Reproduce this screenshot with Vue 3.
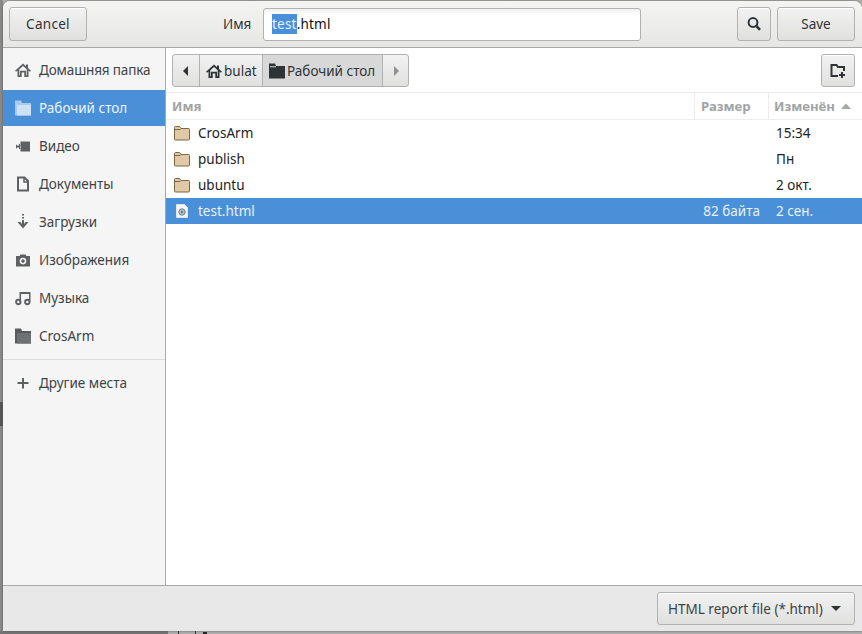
<script setup>
const places = [
  { label: 'Домашняя папка', icon: 'home' },
  { label: 'Рабочий стол', icon: 'folder', active: true },
  { label: 'Видео', icon: 'video' },
  { label: 'Документы', icon: 'doc' },
  { label: 'Загрузки', icon: 'down' },
  { label: 'Изображения', icon: 'camera' },
  { label: 'Музыка', icon: 'music' },
  { label: 'CrosArm', icon: 'folder' }
]
const files = [
  { name: 'CrosArm', size: '', date: '15:34', type: 'dir' },
  { name: 'publish', size: '', date: 'Пн', type: 'dir' },
  { name: 'ubuntu', size: '', date: '2 окт.', type: 'dir' },
  { name: 'test.html', size: '82 байта', date: '2 сен.', type: 'file', selected: true }
]
</script>

<template>
  <div class="desktop">
    <div class="window">
      <header class="header">
        <button class="btn text-btn cancel">Cancel</button>
        <div class="name-group">
          <span class="name-label">Имя</span>
          <div class="entry"><span class="sel">test</span>.html</div>
        </div>
        <div class="header-right">
          <button class="btn icon-btn">
            <svg width="16" height="16" viewBox="0 0 16 16"><circle cx="7" cy="6.500" r="4.400" fill="none" stroke="#2e3436" stroke-width="2"/><path d="M10 9.600l4 4.200" stroke="#2e3436" stroke-width="2.600" fill="none"/></svg>
          </button>
          <button class="btn text-btn">Save</button>
        </div>
      </header>

      <div class="body">
        <aside class="sidebar">
          <div v-for="p in places" :key="p.label" class="place" :class="{ active: p.active }">
            <span class="pi">
              <svg v-if="p.icon === 'home'" width="16" height="16" viewBox="0 0 16 16"><path fill-rule="evenodd" d="M8 1.500L0 8.700l1.100 1.100L2.500 8.600V15h4.200v-4.500h2.600V15h4.200V8.600l1.400 1.200L16 8.700 13 6V2.500h-2v1.700zM4.300 7.300L8 4l3.700 3.300v6h-.7V8.800H5v4.500h-.7z" fill="#5d6162"/></svg>
              <svg v-else-if="p.icon === 'folder'" width="16" height="16" viewBox="0 0 16 16"><path d="M0 0.500h6l1 2.500h9v12.500H0z" :fill="p.active ? '#a9caec' : '#585c5d'"/><path d="M2 5h14v10.500H2z" :fill="p.active ? '#cfe1f5' : '#6d7172'"/></svg>
              <svg v-else-if="p.icon === 'video'" width="16" height="16" viewBox="0 0 16 16"><path d="M5.500 3.500h9.500v10H5.500z" fill="#5d6162"/><path d="M1 6l1 1.500h2V5.800l1 .2v5l-1 .2V9.500H2L1 11z" fill="#5d6162"/></svg>
              <svg v-else-if="p.icon === 'doc'" width="16" height="16" viewBox="0 0 16 16"><path d="M3 1.500h6.500L13 5v9.500H3z" fill="#f6f6f6" stroke="#5d6162" stroke-width="2"/><path d="M9 1v5h5" fill="none" stroke="#5d6162" stroke-width="1.500"/></svg>
              <svg v-else-if="p.icon === 'down'" width="16" height="16" viewBox="0 0 16 16"><path d="M7 0h2v1.500H7zM7 3h2v1.500H7zM7 6h2v4l1.500-2 3 0L8 14.500 2.500 8h3L7 10z" fill="#5d6162"/></svg>
              <svg v-else-if="p.icon === 'camera'" width="16" height="16" viewBox="0 0 16 16"><path fill-rule="evenodd" d="M5.500 2.500h5l1 1.500H15v10.500H1V4h3.500zM8 5.800a3.300 3.300 0 100 6.600 3.300 3.300 0 000-6.600z" fill="#5d6162"/><circle cx="8" cy="9.100" r="1.800" fill="#5d6162"/></svg>
              <svg v-else-if="p.icon === 'music'" width="16" height="16" viewBox="0 0 16 16"><path d="M4.500 2h11v9.500H14V4H6v8H4.500z" fill="#5d6162"/><circle cx="3.300" cy="12" r="2.200" fill="none" stroke="#5d6162" stroke-width="1.900"/><circle cx="12.300" cy="12" r="2.200" fill="none" stroke="#5d6162" stroke-width="1.900"/></svg>
            </span>
            <span class="pl">{{ p.label }}</span>
          </div>
          <div class="side-sep"></div>
          <div class="place">
            <span class="pi"><svg width="16" height="16" viewBox="0 0 16 16"><path d="M7 3h2v4h4.500v2H9v4.500H7V9H2.500V7H7z" fill="#5d6162"/></svg></span>
            <span class="pl">Другие места</span>
          </div>
        </aside>

        <main class="main">
          <div class="pathbar">
            <div class="crumbs">
              <button class="crumb arrow first">
                <svg width="8" height="10" viewBox="0 0 8 10"><path d="M6 0v10L1 5z" fill="#2e3436"/></svg>
              </button>
              <button class="crumb home">
                <svg width="16" height="16" viewBox="0 0 16 16"><path fill-rule="evenodd" d="M8 1.500L0 8.700l1.100 1.100L2.500 8.600V15h4.200v-4.500h2.600V15h4.200V8.600l1.400 1.200L16 8.700 13 6V2.500h-2v1.700zM4.300 7.300L8 4l3.700 3.300v6h-.7V8.800H5v4.500h-.7z" fill="#2e3436"/></svg>
                <span class="cl">bulat</span>
              </button>
              <button class="crumb current">
                <svg width="16" height="16" viewBox="0 0 16 16"><path d="M0 .5h6l1 2.500h9v12.500H0z" fill="#2e3436"/><path d="M1 3.200h6v1H1z" fill="#d8d8d8"/></svg>
                <span class="cl">Рабочий стол</span>
              </button>
              <button class="crumb arrow">
                <svg width="8" height="10" viewBox="0 0 8 10"><path d="M2 0v10l5-5z" fill="#8f9293"/></svg>
              </button>
            </div>
            <button class="btn icon-btn newdir">
              <svg width="16" height="16" viewBox="0 0 16 16"><path d="M14 8V4H8L6.500 2H1.500V13H8" fill="none" stroke="#2e3436" stroke-width="2"/><path d="M11 9h2v2h2v2h-2v2h-2v-2H9v-2h2z" fill="#2e3436"/></svg>
            </button>
          </div>

          <div class="thead">
            <div class="th c-name">Имя</div>
            <div class="th c-size">Размер</div>
            <div class="th c-date">Изменён<svg class="sort" width="12" height="6" viewBox="0 0 12 6"><path d="M1 6l5-5.500L11 6z" fill="#a3a7a8"/></svg></div>
          </div>

          <div class="rows">
            <div v-for="f in files" :key="f.name" class="row" :class="{ selected: f.selected }">
              <div class="c-name cell">
                <svg v-if="f.type === 'dir'" class="ficon" width="16" height="16" viewBox="0 0 16 16"><path d="M.5 14V2.500a1 1 0 011-1h4l1.500 2h7.500a1 1 0 011 1V14a1 1 0 01-1 1h-13a1 1 0 01-1-1z" fill="#dfc9a6" stroke="#7d6642"/><path d="M1 4.500h5.500" stroke="#7d6642"/></svg>
                <svg v-else class="ficon" width="16" height="16" viewBox="0 0 16 16"><path d="M2.500 1.500h8L13.500 4.500v10h-11z" fill="#f4f6f8" stroke="#dfe3e6"/><circle cx="8" cy="9" r="3.200" fill="#b8c2cb" stroke="#6e7f8f"/><circle cx="8" cy="9" r="1.200" fill="#6e7f8f"/></svg>
                <span class="fname">{{ f.name }}</span>
              </div>
              <div class="c-size cell sz">{{ f.size }}</div>
              <div class="c-date cell dt">{{ f.date }}</div>
            </div>
          </div>
        </main>
      </div>

      <footer class="actions">
        <button class="btn combo">HTML report file (*.html)<svg class="caret" width="10" height="5" viewBox="0 0 10 5"><path d="M0 0h10L5 5z" fill="#2e3436"/></svg></button>
      </footer>
    </div>
  </div>
</template>

<style>
html, body { margin: 0; padding: 0; }
</style>

<style scoped>
.desktop {
  width: 862px;
  height: 634px;
  overflow: hidden;
  background:
    linear-gradient(#555, #555) 0 402px / 3px 24px no-repeat,
    linear-gradient(#767676, #767676) 0 631px / 168px 3px no-repeat,
    linear-gradient(#333, #333) 178px 631px / 1px 3px no-repeat,
    linear-gradient(#333, #333) 195px 631px / 1px 3px no-repeat,
    linear-gradient(#222, #222) 203px 632px / 4px 2px no-repeat,
    linear-gradient(90deg, #8c8c8c 3px, #b4b4b4 3px);
  padding: 1px 0 3px 3px;
  box-sizing: border-box;
  font-family: "Noto Sans", "Open Sans", sans-serif;
  font-size: 13.5px;
  color: #2e3436;
}
.window {
  height: 630px;
  display: flex;
  flex-direction: column;
  background: #fff;
  border-radius: 7px 8px 0 0;
  overflow: hidden;
  box-shadow: 0 0 3px #555;
}
.header {
  height: 47px;
  flex: none;
  box-sizing: border-box;
  padding: 6px 7px 6px 6px;
  display: flex;
  align-items: flex-start;
  background: linear-gradient(#f4f4f3, #e6e6e5);
  border-bottom: 1px solid #a8a8a8;
}
.btn {
  font: inherit;
  color: #2e3436;
  box-sizing: border-box;
  border: 1px solid #b0b2b2;
  border-radius: 3px;
  background: linear-gradient(#f2f2f2, #e0e0df);
  box-shadow: inset 0 1px #fff;
  padding: 0;
  display: flex;
  align-items: center;
  justify-content: center;
}
.text-btn { width: 78px; height: 34px; }
.cancel { letter-spacing: 0.3px; }
.icon-btn { width: 34px; height: 34px; }
.name-group {
  display: flex;
  align-items: center;
  margin-left: 136px;
  height: 34px;
}
.name-label { width: 40px; }
.entry {
  width: 378px;
  height: 33px;
  margin-top: 1px;
  box-sizing: border-box;
  border: 1px solid #b0b2b2;
  border-radius: 3px;
  background: linear-gradient(#f0f0f0, #fff 6px);
  padding-left: 8px;
  line-height: 31px;
  color: #101010;
  letter-spacing: 0.2px;
}
.sel { background: #4a90d9; color: #e9f1fa; display: inline-block; height: 20px; line-height: 20px; vertical-align: top; margin-top: 5px; }
.header-right { margin-left: auto; display: flex; gap: 6px; }
.body { flex: 1; display: flex; min-height: 0; }
.sidebar {
  width: 163px;
  flex: none;
  box-sizing: border-box;
  background: #f5f5f5;
  border-right: 1px solid #a8a8a8;
  padding-top: 4px;
}
.place {
  height: 36px;
  margin-bottom: 2px;
  display: flex;
  align-items: center;
  padding-left: 12px;
  color: #3d4345;
}
.place:first-child .pl { letter-spacing: -0.15px; }
.place.active { background: #4a90d9; color: #eef4fb; }
.pi { width: 16px; height: 16px; margin-right: 8px; display: flex; }
.side-sep { height: 1px; background: #dcdcdc; margin: 5px 0 5px; }
.main { flex: 1; min-width: 0; display: flex; flex-direction: column; }
.pathbar {
  height: 45px;
  flex: none;
  box-sizing: border-box;
  padding: 6px 7px 5px 6px;
  display: flex;
  justify-content: space-between;
  border-bottom: 1px solid #ededed;
}
.crumbs {
  display: flex;
  height: 33px;
  box-sizing: border-box;
  border: 1px solid #b0b2b2;
  border-radius: 3px;
  overflow: hidden;
  background: linear-gradient(#f2f2f2, #e0e0df);
}
.crumb {
  font: inherit;
  color: #2e3436;
  border: 0;
  border-right: 1px solid #b0b2b2;
  background: transparent;
  padding: 0 0 0 6px;
  display: flex;
  align-items: center;
  gap: 2px;
  height: 100%;
  box-sizing: border-box;
}
.crumb:last-child { border-right: 0; }
.crumb.arrow { width: 25px; padding: 0; justify-content: center; }
.crumb.arrow.first { width: 27px; }
.crumb.home { width: 63px; }
.crumb.current { width: 120px; background: #d8d8d8; }
.newdir { height: 33px; }
.thead {
  height: 27px;
  flex: none;
  display: flex;
  box-sizing: border-box;
  border-bottom: 1px solid #ededed;
  color: #a0a4a5;
  font-weight: 700;
  font-size: 13.2px;
  line-height: 26px;
}
.th { box-sizing: border-box; }
.c-name { flex: 1; min-width: 0; padding-left: 6px; }
.c-size { width: 74px; box-sizing: border-box; padding-left: 6px; border-left: 1px solid #ededed; }
.c-date { width: 94px; box-sizing: border-box; padding-left: 5px; border-left: 1px solid #ededed; display: flex; align-items: center; }
.sort { margin-left: 5px; }
.row { height: 26px; display: flex; color: #1e2224; line-height: 26px; }
.row.selected { background: #4a90d9; color: #e8f0f9; }
.cell { border-left-color: transparent; }
.c-name.cell { display: flex; align-items: center; padding-left: 8px; }
.ficon { margin-right: 8px; }
.sz { text-align: right; padding: 0 8px 0 0; }
.dt { padding-left: 7px; }
.actions {
  height: 46px;
  flex: none;
  box-sizing: border-box;
  background: #e8e8e8;
  border-top: 1px solid #a8a8a8;
  padding: 6px 7px 5px;
  display: flex;
  justify-content: flex-end;
}
.combo { width: 198px; height: 33px; color: #3d4345; justify-content: flex-start; padding: 0 13px 0 10px; }
.caret { margin-left: auto; }
</style>
